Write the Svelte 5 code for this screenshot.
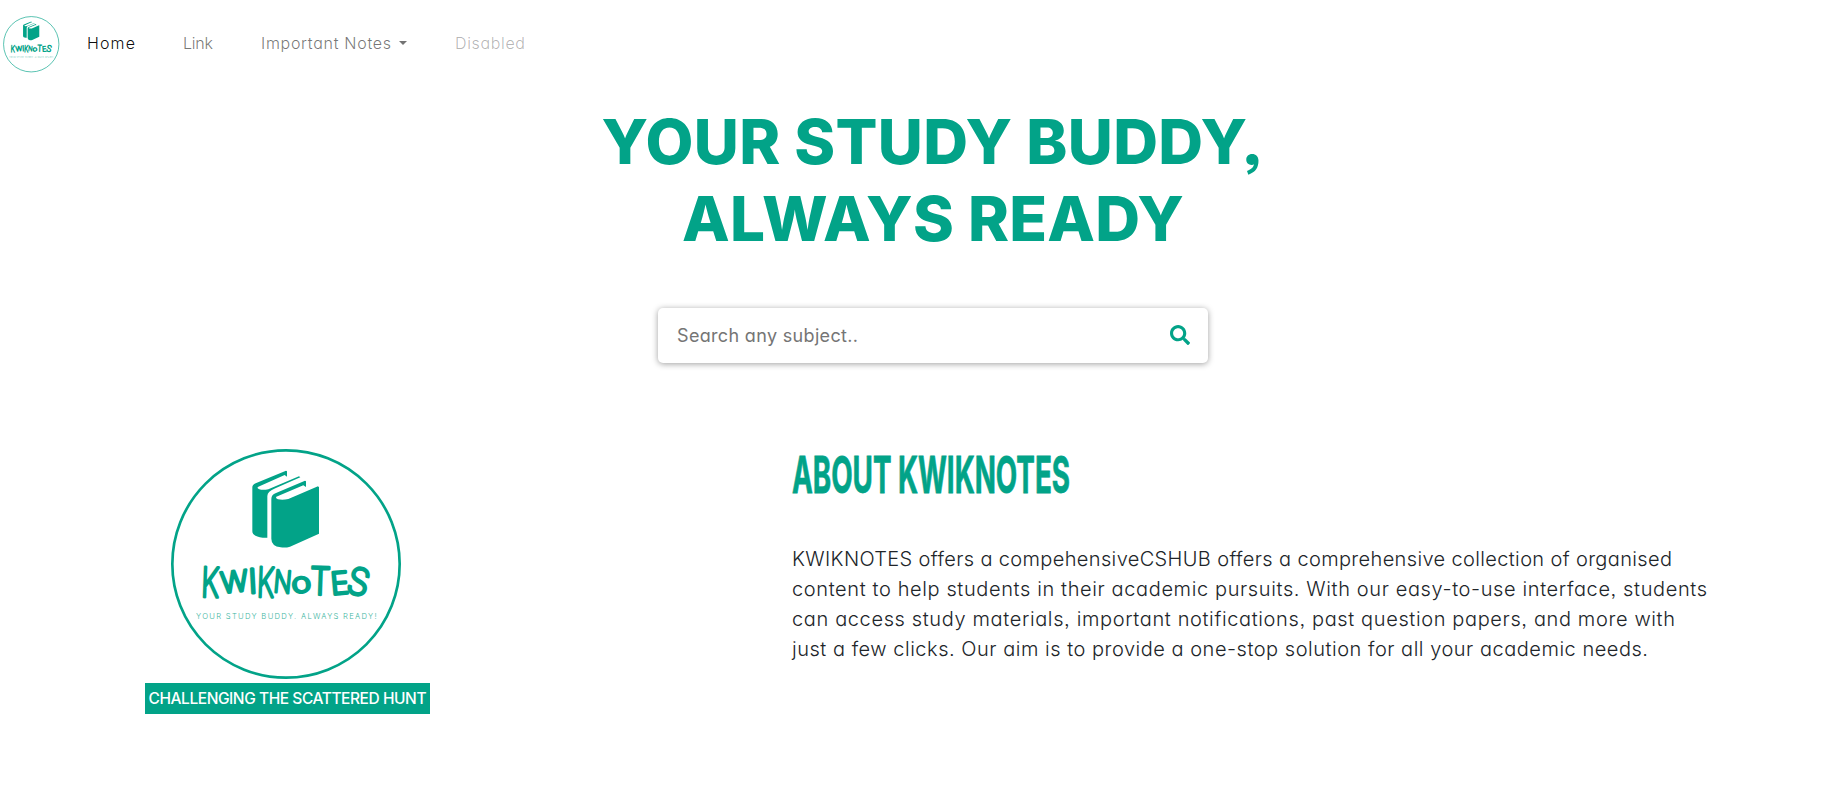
<script>
  const links = [
    { label: 'Home', width: 48, state: 'active' },
    { label: 'Link', width: 30, state: '' },
    { label: 'Important Notes', width: 130, state: '', caret: true },
    { label: 'Disabled', width: 70, state: 'disabled' },
  ];

  const about = [
    { text: 'KWIKNOTES offers a compehensiveCSHUB offers a comprehensive collection of organised', width: 880 },
    { text: 'content to help students in their academic pursuits. With our easy-to-use interface, students', width: 915 },
    { text: 'can access study materials, important notifications, past question papers, and more with', width: 883 },
    { text: 'just a few clicks. Our aim is to provide a one-stop solution for all your academic needs.', width: 856 },
  ];

  // Hand-lettered wordmark: left edge, baseline, width, size and tilt of each letter
  const letters = [
    { c: 'K', x: 214, y: 502, w: 54, s: 123, r: 2 },
    { c: 'W', x: 272, y: 487, w: 82, s: 86, r: -6 },
    { c: 'I', x: 355, y: 490, w: 26, s: 100, r: -3 },
    { c: 'K', x: 381, y: 502, w: 52, s: 123, r: 2 },
    { c: 'N', x: 432, y: 489, w: 53, s: 90, r: 5 },
    { c: 'o', x: 484, y: 488, w: 58, s: 82, r: -6 },
    { c: 'T', x: 540, y: 495, w: 62, s: 114, r: 2 },
    { c: 'E', x: 601, y: 493, w: 55, s: 92, r: -5 },
    { c: 'S', x: 654, y: 495, w: 65, s: 110, r: 14 },
  ];

  // Spreads the letters of a line so that it fills the given width
  function track(node, width) {
    const gaps = node.textContent.length - 1;
    const spacing = (width - node.getBoundingClientRect().width) / gaps;
    node.style.letterSpacing = `${spacing}px`;
    node.style.marginRight = `${-spacing}px`;
  }
</script>

{#snippet logo()}
  <svg class="logo" viewBox="120 55 696 696" aria-label="Kwiknotes">
    <circle cx="468" cy="403" r="341" fill="none" stroke="currentColor" stroke-width="8" />
    <g transform="translate(330 90)" fill="currentColor">
      <path d="M37 83Q37 75 47 71L138 33L141 35V51L134 46L55 81Q49 85 58 89Q68 92 85 89L177 50L181 53L106 86Q82 96 82 109V234H68Q37 230 37 215Z" />
      <path d="M94 118Q94 105 108 100L195 63L198 65V82L190 77L109 111Q106 115 114 119Q128 122 145 118L234 80L237 83V222L150 261Q137 265 122 263Q94 259 94 237Z" />
    </g>
    <g class="wordmark">
      {#each letters as l}
        <text x={l.x} y={l.y} font-size={l.s} textLength={l.w} lengthAdjust="spacingAndGlyphs" transform="rotate({l.r} {l.x + l.w / 2} 455)">{l.c}</text>
      {/each}
    </g>
    <text class="tagline" x="198" y="569" textLength="542">YOUR STUDY BUDDY. ALWAYS READY!</text>
  </svg>
{/snippet}

<nav>
  <a class="brand" href="#home">{@render logo()}</a>
  <ul>
    {#each links as link}
      <li class={link.state}>
        <span use:track={link.width}>{link.label}</span>{#if link.caret}<i class="caret"></i>{/if}
      </li>
    {/each}
  </ul>
</nav>

<header>
  <h1>
    <span use:track={663}>YOUR STUDY BUDDY,</span>
    <span use:track={502}>ALWAYS READY</span>
  </h1>
  <div class="search">
    <span use:track={181}>Search any subject..</span>
    <svg viewBox="0 0 512 512" width="20" height="20"><path fill="currentColor" d="M505 442.700L405.300 343c-4.500-4.500-10.600-7-17-7H372c27.600-35.300 44-79.700 44-128C416 93.100 322.900 0 208 0S0 93.100 0 208s93.100 208 208 208c48.300 0 92.700-16.400 128-44v16.300c0 6.400 2.500 12.500 7 17l99.700 99.700c9.400 9.400 24.600 9.400 33.900 0l28.300-28.300c9.400-9.400 9.400-24.600.1-34zM208 336c-70.700 0-128-57.200-128-128 0-70.700 57.200-128 128-128 70.700 0 128 57.200 128 128 0 70.700-57.200 128-128 128z" /></svg>
  </div>
</header>

<main>
  <figure>
    {@render logo()}
    <figcaption><span use:track={278}>CHALLENGING THE SCATTERED HUNT</span></figcaption>
  </figure>
  <section>
    <h2>
      <svg viewBox="0 0 280 64" width="280" height="64">
        <text x="0" y="51" textLength="278" lengthAdjust="spacingAndGlyphs">ABOUT KWIKNOTES</text>
      </svg>
    </h2>
    <p>
      {#each about as line}
        <span use:track={line.width}>{line.text}</span>
      {/each}
    </p>
  </section>
</main>

<style>
  :global(body) {
    background: #fff;
    color: #212529;
    font-family: Inter, 'Open Sans', sans-serif;
    font-feature-settings: 'cv11', 'ss03';
    overflow: hidden;
  }

  span {
    display: inline-block;
    white-space: nowrap;
  }

  .logo {
    display: block;
    color: #02a388;
  }

  .wordmark {
    fill: currentColor;
    stroke: currentColor;
    stroke-width: 9;
    stroke-linejoin: round;
    font-weight: 200;
  }

  .tagline {
    fill: currentColor;
    font-size: 23px;
    font-weight: 300;
    opacity: 0.8;
  }

  nav {
    display: flex;
    align-items: flex-start;
    height: 87px;
    padding: 16px 0 0 3px;
    box-sizing: border-box;
  }

  .brand .logo {
    width: 56.500px;
    height: 56.500px;
  }

  ul {
    display: flex;
    gap: 48px;
    margin: 15px 0 0 27.500px;
    padding: 0;
    list-style: none;
    font-size: 16px;
    font-weight: 350;
    line-height: 24px;
  }

  li {
    display: flex;
    align-items: center;
    color: rgba(0, 0, 0, 0.55);
  }

  .active {
    color: rgba(0, 0, 0, 0.95);
  }

  .disabled {
    color: rgba(0, 0, 0, 0.3);
  }

  .caret {
    margin-left: 8px;
    border: 4.500px solid transparent;
    border-top-color: currentColor;
    border-bottom: 0;
  }

  header {
    display: flex;
    flex-direction: column;
    align-items: center;
    padding: 16px 0 0 20px;
  }

  h1 {
    display: flex;
    flex-direction: column;
    align-items: center;
    margin: 0;
    color: #02a388;
    font-size: 62px;
    font-weight: 800;
    line-height: 77px;
  }

  .search {
    display: flex;
    align-items: center;
    justify-content: space-between;
    width: 550px;
    height: 55px;
    margin-top: 51px;
    padding: 0 18px 0 19px;
    box-sizing: border-box;
    border-radius: 5px;
    box-shadow: 0 1px 6px rgba(0, 0, 0, 0.38);
    color: #757575;
    font-size: 18px;
  }

  .search svg {
    color: #02a388;
    margin-bottom: 2px;
  }

  main {
    display: flex;
    padding: 85px 0 0 145px;
  }

  figure {
    display: flex;
    flex-direction: column;
    align-items: center;
    width: 285px;
    margin: 0 362px 0 0;
  }

  figure .logo {
    width: 232px;
    height: 232px;
    margin: 0 3px 0 0;
  }

  figcaption {
    width: 285px;
    height: 31px;
    margin-top: 3px;
    background: #02a388;
    color: #fff;
    font-size: 15.500px;
    font-weight: 450;
    line-height: 31px;
    text-align: center;
  }

  h2 {
    margin: -6px 0 0;
    height: 64px;
  }

  h2 svg {
    display: block;
    overflow: visible;
    fill: #02a388;
    stroke: #02a388;
    stroke-width: 0.8px;
    font-size: 50.500px;
    font-weight: 750;
  }

  p {
    display: flex;
    flex-direction: column;
    align-items: flex-start;
    margin: 38px 0 0;
    font-size: 20px;
    font-weight: 300;
    line-height: 30px;
  }
</style>
